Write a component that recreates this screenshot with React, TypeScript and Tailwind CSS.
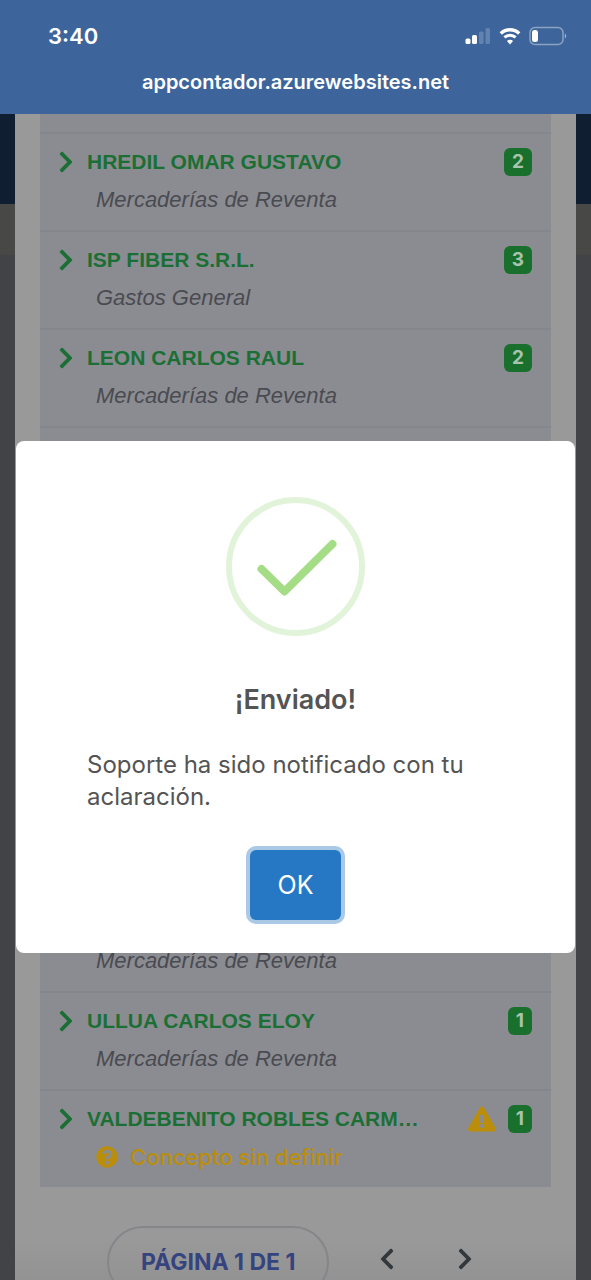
import {
  FaChevronLeft,
  FaChevronRight,
  FaExclamationTriangle,
  FaQuestionCircle,
} from "react-icons/fa";

type Supplier = {
  name?: string;
  concept?: string;
  count?: number;
  warning?: boolean;
};

const firstSuppliers: Supplier[] = [
  { name: "HREDIL OMAR GUSTAVO", concept: "Mercaderías de Reventa", count: 2 },
  { name: "ISP FIBER S.R.L.", concept: "Gastos General", count: 3 },
  { name: "LEON CARLOS RAUL", concept: "Mercaderías de Reventa", count: 2 },
];

const lastSuppliers: Supplier[] = [
  { concept: "Mercaderías de Reventa" },
  { name: "ULLUA CARLOS ELOY", concept: "Mercaderías de Reventa", count: 1 },
  { name: "VALDEBENITO ROBLES CARM…", count: 1, warning: true },
];

function StatusBar() {
  return (
    <div className="flex items-center justify-between pr-6 pl-12">
      <span className="text-[22px] leading-7 font-semibold">3:40</span>
      <div className="flex items-center gap-2">
        <svg width="26" height="18" viewBox="0 0 26 18" fill="currentColor" aria-hidden="true">
          <rect x="0.500" y="11.500" width="5" height="5.500" rx="1.500" />
          <rect x="7" y="8" width="5" height="9" rx="1.500" />
          <rect x="14" y="4.500" width="4.500" height="12.500" rx="1.500" opacity="0.2" />
          <rect x="20.500" y="1" width="4.500" height="16" rx="1.500" opacity="0.2" />
        </svg>
        <svg width="22" height="18" viewBox="0 0 22 18" fill="none" aria-hidden="true">
          <path d="M1.800 6.400C7 1.500 15 1.500 20.200 6.400" stroke="currentColor" strokeWidth="3.400" />
          <path d="M5.400 10.400C8.500 7.500 13.500 7.500 16.600 10.400" stroke="currentColor" strokeWidth="3" />
          <path d="M11 17.400L7.900 14C9.600 12.400 12.400 12.400 14.100 14Z" fill="currentColor" />
        </svg>
        <svg width="38" height="20" viewBox="0 0 38 20" fill="none" aria-hidden="true">
          <rect x="1" y="1.500" width="33" height="17" rx="5" stroke="currentColor" strokeOpacity="0.4" strokeWidth="1.500" />
          <rect x="3" y="4" width="6" height="12" rx="2.500" fill="currentColor" />
          <path d="M35.800 7.500C37.700 8.500 37.700 11.500 35.800 12.500Z" fill="currentColor" fillOpacity="0.5" />
        </svg>
      </div>
    </div>
  );
}

function SupplierRow({ name, concept, count, warning }: Supplier) {
  return (
    <li className="flex h-[98px] flex-col gap-2 border-t-2 border-[#85868d] pt-3 pr-[19px] pl-[18px]">
      <div className="flex h-8 items-center">
        {name && (
          <button type="button" className="flex min-w-0 flex-1 items-center gap-2 text-left text-[#1b6f35]">
            <FaChevronRight className="h-6 w-4 shrink-0" />
            <span className="truncate pl-[5px] font-[Liberation_Sans,sans-serif] text-[21px] leading-8 font-bold">
              {name}
            </span>
          </button>
        )}
        {warning && <FaExclamationTriangle className="mr-3 size-7 shrink-0 text-[#ba8e0a]" />}
        {count && (
          <span className="rounded-md bg-[#18702c] px-2 text-[19px] leading-7 font-bold text-[#a9c3af]">
            {count}
          </span>
        )}
      </div>
      {concept ? (
        <p className="pl-[38px] font-[Liberation_Sans,sans-serif] text-[22px] leading-7 text-[#4a4b50] italic">
          {concept}
        </p>
      ) : (
        <p className="flex items-center gap-3 pl-[38px] text-[22px] leading-7 font-medium text-[#ba8e0a]">
          <FaQuestionCircle className="size-[22px]" />
          Concepto sin definir
        </p>
      )}
    </li>
  );
}

function SuccessDialog() {
  return (
    <div
      role="alertdialog"
      aria-modal="true"
      aria-labelledby="dialog-title"
      aria-describedby="dialog-text"
      className="flex w-full flex-col items-center rounded-lg bg-white px-[71px] pt-[56px] pb-[33px] text-[#545454]"
    >
      <svg width="140" height="140" viewBox="0 0 140 140" fill="none" aria-hidden="true">
        <circle cx="69.500" cy="69.500" r="66.500" stroke="#e1f3d8" strokeWidth="6" />
        <path
          d="M35.500 72L58.500 94.500L106.500 47"
          stroke="#a5dc86"
          strokeWidth="8"
          strokeLinecap="round"
          strokeLinejoin="round"
        />
      </svg>
      <h2 id="dialog-title" className="mt-[45px] text-[27px] leading-9 font-semibold">
        ¡Enviado!
      </h2>
      <p id="dialog-text" className="mt-[31px] w-full text-[24px] leading-8">
        Soporte ha sido notificado con tu aclaración.
      </p>
      <button
        type="button"
        className="mt-[37px] rounded-md bg-[#2778c4] px-7 py-[17px] text-[25px] leading-9 text-white ring-4 ring-[#a9c9e7]"
      >
        OK
      </button>
    </div>
  );
}

export default function App() {
  return (
    <div className="flex h-screen flex-col overflow-hidden bg-[#424347] font-[Inter,sans-serif]">
      <header className="bg-[#3d659b] pt-[22px] pb-[18px] text-white">
        <StatusBar />
        <p className="mt-[18px] text-center text-[20px] leading-7 font-semibold">
          appcontador.azurewebsites.net
        </p>
      </header>

      <main className="relative grid min-h-0 flex-1 overflow-hidden">
        <div className="col-start-1 row-start-1">
          <div className="h-[90px] bg-[#101e31]" />
          <div className="h-[51px] bg-[#484846]" />
        </div>

        <section className="col-start-1 row-start-1 mx-[15px] bg-linear-to-b from-[#999999] from-95% to-[#909090] px-[25px]">
          <ul className="bg-[#8b8c92] pt-[18px]">
            {firstSuppliers.map((s) => (
              <SupplierRow key={s.name} {...s} />
            ))}
            <li className="h-[467px] border-t-2 border-[#85868d]" aria-hidden="true" />
            {lastSuppliers.map((s, i) => (
              <SupplierRow key={i} {...s} />
            ))}
          </ul>
          <nav className="mt-[39px] flex items-start pl-[67px]">
            <button
              type="button"
              className="rounded-full border-2 border-[#85868a] px-8 py-4 text-[23px] leading-9 font-bold text-[#35447f]"
            >
              PÁGINA 1 DE 1
            </button>
            <button type="button" aria-label="Anterior" className="ml-[30px] px-4 py-[21px] text-[#33383d]">
              <FaChevronLeft className="size-6" />
            </button>
            <button type="button" aria-label="Siguiente" className="ml-[22px] px-4 py-[21px] text-[#33383d]">
              <FaChevronRight className="size-6" />
            </button>
          </nav>
        </section>

        <div className="absolute inset-0 flex items-center px-4">
          <SuccessDialog />
        </div>
      </main>
    </div>
  );
}
